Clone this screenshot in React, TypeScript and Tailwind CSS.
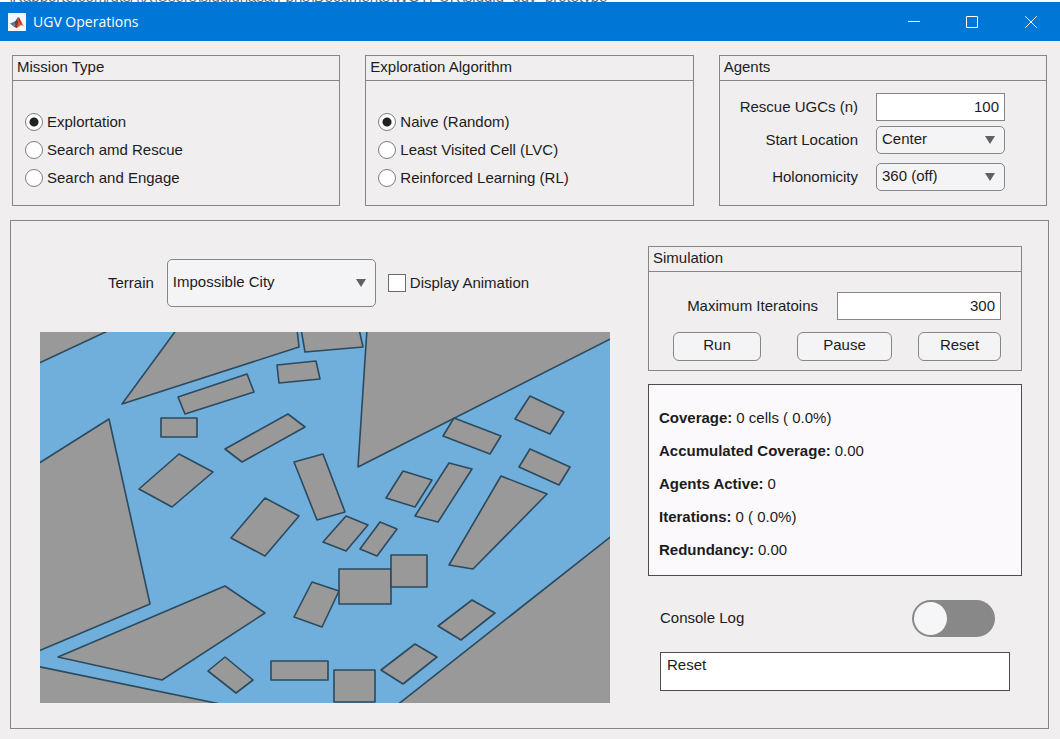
import { useState, type ReactNode } from "react";

const OBSTACLES = [
  "-5,-5 72,-3 -5,33",
  "137,-3 82,72 259,15 257,-3",
  "261,-3 265,20 323,15 319,-3",
  "327,-3 318,135 574,5 574,-3",
  "237,33 276,29 280,47 239,51",
  "138,65 207,42 214,60 145,82",
  "121,86 157,86 157,105 121,105",
  "185,117 248,82 265,95 202,130",
  "-4,133 69,87 110,272 -4,320",
  "139,122 173,140 132,175 99,157",
  "225,166 259,184 225,224 191,206",
  "254,130 283,122 305,180 277,188",
  "283,210 306,184 328,193 306,219",
  "320,217 340,190 357,197 337,224",
  "346,166 363,139 392,148 375,175",
  "375,184 409,131 432,137 398,190",
  "403,104 414,86 461,104 450,122",
  "475,87 490,64 524,80 510,102",
  "479,135 490,117 530,135 519,153",
  "409,233 461,144 507,162 433,237",
  "299,237 351,237 351,272 299,272",
  "351,223 387,223 387,255 351,255",
  "254,285 272,250 299,259 282,295",
  "398,294 432,268 455,281 421,308",
  "341,338 375,312 397,325 363,352",
  "294,338 335,338 335,370 294,370",
  "231,329 288,329 288,348 231,348",
  "168,339 185,325 213,348 196,361",
  "18,325 185,254 225,281 122,348",
  "-4,334 185,373 -4,375",
  "574,202 356,374 574,375",
];

function MatlabIcon() {
  return (
    <svg viewBox="0 0 18 18" className="h-[18px] w-[18px] shrink-0" aria-hidden="true">
      <rect width="18" height="18" fill="#f4f6f8" />
      <path d="M2 10.6 6.2 8.8 8.2 11 5.3 13.2Z" fill="#3f7fa8" />
      <path d="M6.2 8.8C8 8.5 8.4 5.4 10.2 4.2L8.8 10.3 7.6 11.6Z" fill="#27506e" />
      <path d="M5.3 13.2C7 13 7.8 10.6 8.8 9 9.6 7.4 9.8 4.6 10.6 4.2L11.6 8 10.6 13.4 8.6 15Z" fill="#a2281c" />
      <path d="M10.6 4.2C12 4.4 13.4 9.4 16 13.4 13.8 11.6 12.6 12 11 13.6L8.6 15C10.4 11.4 10.2 7 10.6 4.2Z" fill="#e0602a" />
      <path d="M10.6 4.2C11.6 5.4 12.4 8.6 13.2 11.4 12.4 11 11.6 9.6 10.6 4.2Z" fill="#8c2118" />
    </svg>
  );
}

function Panel({ title, className, children }: { title: string; className?: string; children: ReactNode }) {
  return (
    <section className={`border border-[#868686] ${className ?? ""}`}>
      <h2 className="h-[25px] border-b border-[#868686] px-1 leading-[22px]">{title}</h2>
      {children}
    </section>
  );
}

function RadioList({ name, options }: { name: string; options: string[] }) {
  return (
    <div className="px-3 pt-[27px]">
      {options.map((option, i) => (
        <label key={option} className="flex h-7 items-center gap-1">
          <input
            type="radio"
            name={name}
            defaultChecked={i === 0}
            className="h-[18px] w-[18px] shrink-0 appearance-none rounded-full border border-[#7d7d7d] bg-white checked:bg-[radial-gradient(circle,#222_4px,#fff_5px)]"
          />
          {option}
        </label>
      ))}
    </div>
  );
}

function Select({ id, options, className }: { id: string; options: string[]; className: string }) {
  return (
    <div className={`relative ${className}`}>
      <select
        id={id}
        className="h-full w-full appearance-none rounded-[5px] border border-[#868686] bg-[#f4f3f5] pr-6 pb-0.5 pl-[5px]"
      >
        {options.map((option) => (
          <option key={option}>{option}</option>
        ))}
      </select>
      <svg
        viewBox="0 0 10 8"
        className="pointer-events-none absolute inset-y-0 right-[10px] my-auto h-2 w-[10px]"
        aria-hidden="true"
      >
        <path d="M0 0H10L5 8Z" fill="#606060" />
      </svg>
    </div>
  );
}

function TerrainMap() {
  return (
    <svg viewBox="0 0 570 371" className="mt-[25px] block w-full" role="img" aria-label="Terrain">
      <rect width="570" height="371" fill="#70aedb" />
      <g fill="#999999" stroke="#2b4a5e" strokeWidth="1.6" strokeLinejoin="round">
        {OBSTACLES.map((points) => (
          <polygon key={points} points={points} />
        ))}
      </g>
    </svg>
  );
}

const STATS = [
  ["Coverage:", "0 cells ( 0.0%)"],
  ["Accumulated Coverage:", "0.00"],
  ["Agents Active:", "0"],
  ["Iterations:", "0 ( 0.0%)"],
  ["Redundancy:", "0.00"],
];

const BUTTON = "h-[29px] rounded-[6px] border border-[#868686] bg-[#f4f3f5] pb-0.5 active:bg-[#e2e2e4]";
const FIELD = "h-7 border border-[#868686] bg-white pr-[5px] pb-0.5 text-right";

export default function App() {
  const [log, setLog] = useState("Reset");

  return (
    <div className="min-h-screen bg-[#f0eeef] font-['Liberation_Sans',Arial,sans-serif] text-[15px] text-[#1c1c1c]">
      <div className="flex h-0.5 items-end overflow-hidden bg-white pl-2 text-[#666]">
        <span className="whitespace-nowrap leading-[10px]">
          \Rapporte.com/gts/\\X\Users\siddighasan-pns\Documents\WOTPUR\siddig_ugv_prototype
        </span>
      </div>
      <header className="flex h-[39px] items-center bg-[#0077d7] pl-2 text-white">
        <MatlabIcon />
        <h1 className="ml-[7px] font-['Open_Sans','Noto_Sans',sans-serif] text-[14px]">UGV Operations</h1>
        <div className="ml-auto flex self-stretch">
          <button aria-label="Minimize" className="flex w-[58px] items-center justify-center">
            <svg viewBox="0 0 12 12" className="h-3 w-3" stroke="currentColor" fill="none">
              <path d="M0 5.5H12" />
            </svg>
          </button>
          <button aria-label="Maximize" className="flex w-[58px] items-center justify-center">
            <svg viewBox="0 0 12 12" className="h-3 w-3" stroke="currentColor" fill="none">
              <path d="M.5 .5H11.5V11.5H.5Z" />
            </svg>
          </button>
          <button aria-label="Close" className="flex w-[59px] items-center justify-center">
            <svg viewBox="0 0 12 12" className="h-3 w-3" stroke="currentColor" fill="none">
              <path d="M.3 .3 11.7 11.7M11.7 .3 .3 11.7" />
            </svg>
          </button>
        </div>
      </header>

      <main className="flex flex-col gap-[14px] pt-[14px] pr-[11px] pb-2.5 pl-2.5">
        <div className="grid grid-cols-3 gap-[25px] px-0.5">
          <Panel title="Mission Type">
            <RadioList name="mission" options={["Explortation", "Search amd Rescue", "Search and Engage"]} />
          </Panel>
          <Panel title="Exploration Algorithm">
            <RadioList
              name="algorithm"
              options={["Naive (Random)", "Least Visited Cell (LVC)", "Reinforced Learning (RL)"]}
            />
          </Panel>
          <Panel title="Agents">
            <div className="grid grid-cols-[1fr_129px] items-center gap-x-[18px] pt-3 pr-[41px] pb-[14px] text-right">
              <label htmlFor="agents">Rescue UGCs (n)</label>
              <input id="agents" type="text" defaultValue="100" className={`w-full ${FIELD}`} />
              <label htmlFor="start" className="mt-[5px]">
                Start Location
              </label>
              <Select id="start" options={["Center", "Corner"]} className="mt-[5px] h-7" />
              <label htmlFor="holonomicity" className="mt-[9px]">
                Holonomicity
              </label>
              <Select id="holonomicity" options={["360 (off)", "180"]} className="mt-[9px] h-7" />
            </div>
          </Panel>
        </div>

        <div className="grid grid-cols-[570fr_374fr] gap-x-[38px] border border-[#868686] pt-[25px] pr-[26px] pb-[25px] pl-[29px]">
          <div className="min-w-0 pt-[13px]">
            <div className="flex items-center pl-[68px]">
              <label htmlFor="terrain">Terrain</label>
              <Select id="terrain" options={["Impossible City", "Open Field"]} className="ml-[13px] h-12 w-[209px]" />
              <label className="ml-3 flex items-center gap-1">
                <input
                  type="checkbox"
                  className="h-[18px] w-[18px] shrink-0 appearance-none border border-[#6b6b6b] bg-white checked:bg-[#555]"
                />
                Display Animation
              </label>
            </div>
            <TerrainMap />
          </div>

          <div className="min-w-0">
            <Panel title="Simulation">
              <div className="pt-5 pr-5 pb-[9px] pl-6">
                <div className="flex items-center justify-end gap-[19px]">
                  <label htmlFor="iterations">Maximum Iteratoins</label>
                  <input id="iterations" type="text" defaultValue="300" className={`w-[164px] ${FIELD}`} />
                </div>
                <div className="mt-3 flex">
                  <button className={`w-[88px] ${BUTTON}`} onClick={() => setLog("Run")}>
                    Run
                  </button>
                  <button className={`ml-9 w-[95px] ${BUTTON}`} onClick={() => setLog("Pause")}>
                    Pause
                  </button>
                  <button className={`ml-auto w-[83px] ${BUTTON}`} onClick={() => setLog("Reset")}>
                    Reset
                  </button>
                </div>
              </div>
            </Panel>

            <dl className="mt-[13px] border border-[#4d4d4d] bg-[#fbf9fc] px-[10px] pt-[17px] pb-2">
              {STATS.map(([name, value]) => (
                <div key={name} className="flex h-[33px] items-center gap-1">
                  <dt className="font-bold">{name}</dt>
                  <dd>{value}</dd>
                </div>
              ))}
            </dl>

            <div className="mt-6 px-3">
              <label className="flex items-center justify-between pr-[15px]">
                Console Log
                <input type="checkbox" role="switch" className="peer sr-only" />
                <span className="flex h-[37px] w-[83px] rounded-full bg-[#888888] p-0.5 peer-checked:justify-end">
                  <span className="h-[33px] w-[33px] rounded-full bg-[#f6f5f7]" />
                </span>
              </label>
              <textarea
                aria-label="Console output"
                readOnly
                value={log}
                className="mt-[15px] block h-[39px] w-full resize-none border border-[#4d4d4d] bg-white px-1.5 pt-0.5 leading-5"
              />
            </div>
          </div>
        </div>
      </main>
    </div>
  );
}
